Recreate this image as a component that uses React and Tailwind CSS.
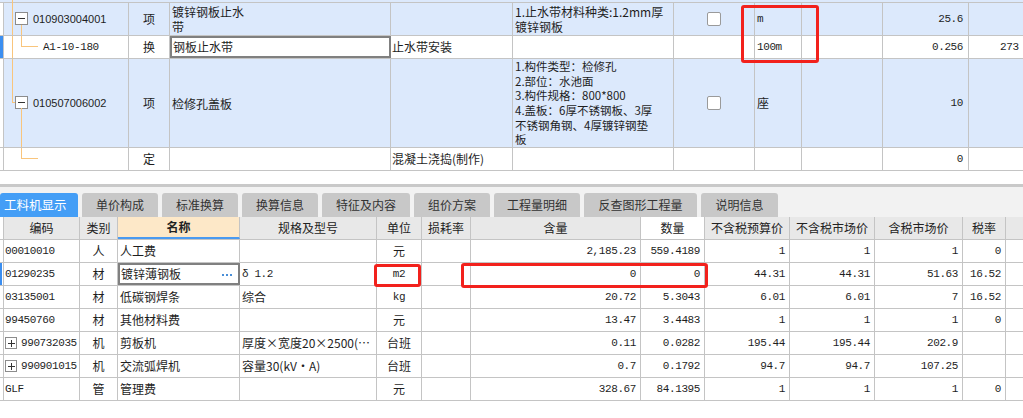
import React from "react";

const CJK = "font-['Noto_Sans_CJK_SC',sans-serif]";
const MONO = "font-['Liberation_Mono','Noto_Sans_CJK_SC',monospace] text-[11px] tracking-[-0.4px]";
const SANS = "font-['Liberation_Sans','Noto_Sans_CJK_SC',sans-serif] text-[11px]";

function Orange({ className }) {
  return <span className={"absolute bg-[#f9c57c] " + className} />;
}

function MinusBox({ className }) {
  return (
    <span className={"absolute w-[13px] h-[13px] border border-[#8c8c8c] bg-white flex items-center justify-center " + className}>
      <span className="block w-[7px] h-[1px] bg-[#333]" />
    </span>
  );
}

function PlusBox() {
  return (
    <span className="relative w-[12px] h-[12px] shrink-0 border border-[#8c8c8c] bg-white flex items-center justify-center">
      <span className="absolute w-[7px] h-[1px] bg-[#333]" />
      <span className="absolute w-[1px] h-[7px] bg-[#333]" />
    </span>
  );
}

function CheckBox() {
  return <span className="block w-[14px] h-[14px] bg-white border border-[#9a9a9a] rounded-[2px]" />;
}

function TopRow({ h, blue, active, tree, code, kind, name, editName, item, desc, check, unit, qty, extra }) {
  return (
    <div className={`flex shrink-0 border-b border-[#c4c4c4] ${h} ${blue ? "bg-[#dce9fc]" : "bg-white"}`}>
      <div className={`w-[3px] shrink-0 ${active ? "bg-[#3b8ef0]" : "bg-white"}`} />
      <div className="relative w-[126px] shrink-0 border-x border-[#c4c4c4] flex items-center">
        {tree}
        {code}
      </div>
      <div className="w-[41px] shrink-0 border-r border-[#c4c4c4] flex items-center justify-center">{kind}</div>
      {editName ? (
        <div className="w-[221px] shrink-0 border-2 border-[#808080] bg-white flex items-center pl-[1px]">{name}</div>
      ) : (
        <div className="w-[221px] shrink-0 border-r border-[#c4c4c4] flex items-center pl-[2px] leading-[15px]">{name}</div>
      )}
      <div className="w-[122px] shrink-0 border-r border-[#c4c4c4] flex items-center pl-[1px]">{item}</div>
      <div className="w-[161px] shrink-0 border-r border-[#c4c4c4] flex items-center pl-[2px] whitespace-nowrap">{desc}</div>
      <div className="w-[81px] shrink-0 border-r border-[#c4c4c4] flex items-center justify-center">{check ? <CheckBox /> : null}</div>
      <div className="w-[47px] shrink-0 border-r border-[#c4c4c4] flex items-center pl-[2px]">{unit}</div>
      <div className="w-[81px] shrink-0 border-r border-[#c4c4c4]" />
      <div className={`w-[86px] shrink-0 border-r border-[#c4c4c4] flex items-center justify-end pr-[5px] ${MONO}`}>{qty}</div>
      <div className={`w-[100px] shrink-0 flex items-center pl-[31px] ${MONO}`}>{extra}</div>
    </div>
  );
}

const bottomRows = [
  { code: "00010010", type: "人", name: "人工费", spec: "", unit: "元", hl: "2,185.23", sl: "559.4189", p1: "1", p2: "1", p3: "1", tax: "0" },
  { code: "01290235", type: "材", name: "镀锌薄钢板", spec: "δ1.2", unit: "m2", hl: "0", sl: "0", p1: "44.31", p2: "44.31", p3: "51.63", tax: "16.52", edit: true },
  { code: "03135001", type: "材", name: "低碳钢焊条", spec: "综合", unit: "kg", hl: "20.72", sl: "5.3043", p1: "6.01", p2: "6.01", p3: "7", tax: "16.52" },
  { code: "99450760", type: "材", name: "其他材料费", spec: "", unit: "元", hl: "13.47", sl: "3.4483", p1: "1", p2: "1", p3: "1", tax: "0" },
  { code: "990732035", plus: true, type: "机", name: "剪板机", spec: "厚度×宽度20×2500(…", unit: "台班", hl: "0.11", sl: "0.0282", p1: "195.44", p2: "195.44", p3: "202.9", tax: "" },
  { code: "990901015", plus: true, type: "机", name: "交流弧焊机", spec: "容量30(kV·A)", unit: "台班", hl: "0.7", sl: "0.1792", p1: "94.7", p2: "94.7", p3: "107.25", tax: "" },
  { code: "GLF", type: "管", name: "管理费", spec: "", unit: "元", hl: "328.67", sl: "84.1395", p1: "1", p2: "1", p3: "1", tax: "0" },
];

const tabs = [
  { t: "工料机显示", w: "w-[78px]", active: true },
  { t: "单价构成", w: "w-[76px]" },
  { t: "标准换算", w: "w-[76px]" },
  { t: "换算信息", w: "w-[76px]" },
  { t: "特征及内容", w: "w-[88px]" },
  { t: "组价方案", w: "w-[76px]" },
  { t: "工程量明细", w: "w-[86px]" },
  { t: "反查图形工程量", w: "w-[113px]" },
  { t: "说明信息", w: "w-[77px]" },
];

function isAsciiUnit(u) {
  return /^[a-z0-9]+$/i.test(u);
}

function BottomRow({ r }) {
  const num = `flex items-center justify-end pr-[4px] border-r border-[#c4c4c4] ${MONO}`;
  return (
    <div className="flex shrink-0 h-[23px] border-b border-[#c4c4c4] bg-white">
      <div className="w-[3px] shrink-0 flex">
        {r.edit ? <div className="w-[2px] bg-[#3b8ef0]" /> : null}
      </div>
      <div className={`w-[77px] shrink-0 border-x border-[#c4c4c4] flex items-center pl-[1px] gap-[4px] ${MONO}`}>
        {r.plus ? <PlusBox /> : null}
        <span>{r.code}</span>
      </div>
      <div className="w-[38px] shrink-0 border-r border-[#c4c4c4] flex items-center justify-center">{r.type}</div>
      {r.edit ? (
        <div className="w-[122px] shrink-0 border-2 border-[#808080] flex items-center pl-[1px] justify-between pr-[6px]">
          <span>{r.name}</span>
          <span className="flex items-center gap-[2px] pt-[2px]">
            <span className="block w-[2px] h-[2px] bg-[#4a8fd8]" />
            <span className="block w-[2px] h-[2px] bg-[#4a8fd8]" />
            <span className="block w-[2px] h-[2px] bg-[#4a8fd8]" />
          </span>
        </div>
      ) : (
        <div className="w-[122px] shrink-0 border-r border-[#c4c4c4] flex items-center pl-[2px]">{r.name}</div>
      )}
      <div className="w-[137px] shrink-0 border-r border-[#c4c4c4] flex items-center pl-[2px] whitespace-nowrap overflow-hidden">
        {r.spec === "δ1.2" ? <span className={MONO}>δ 1.2</span> : r.spec}
      </div>
      <div className={`w-[45px] shrink-0 border-r border-[#c4c4c4] flex items-center justify-center ${isAsciiUnit(r.unit) ? MONO : ""}`}>{r.unit}</div>
      <div className="w-[49px] shrink-0 border-r border-[#c4c4c4]" />
      <div className={`w-[170px] shrink-0 ${num}`}>{r.hl}</div>
      <div className={`w-[64px] shrink-0 ${num}`}>{r.sl}</div>
      <div className={`w-[85px] shrink-0 ${num}`}>{r.p1}</div>
      <div className={`w-[85px] shrink-0 ${num}`}>{r.p2}</div>
      <div className={`w-[88px] shrink-0 ${num}`}>{r.p3}</div>
      <div className={`w-[43px] shrink-0 ${num}`}>{r.tax}</div>
      <div className="w-[60px] shrink-0" />
    </div>
  );
}

export default function App() {
  return (
    <div className={`relative w-[1023px] h-[418px] overflow-hidden bg-white text-[12px] text-[#1e1e1e] flex flex-col ${CJK}`}>
      {/* top table */}
      <div className="flex flex-col shrink-0 w-[1100px]">
        <div className="h-[3px] shrink-0 border-b border-[#c4c4c4] bg-[#dce9fc] relative">
          <span className="absolute left-[12px] top-0 w-[1px] h-[3px] bg-[#f9c57c]" />
        </div>
        <TopRow
          h="h-[33px]"
          blue
          tree={
            <>
              <Orange className="left-[8px] top-0 bottom-0 w-[1px]" />
              <MinusBox className="left-[11px] top-[9px]" />
              <Orange className="left-[17px] top-[22px] bottom-0 w-[1px]" />
            </>
          }
          code={<span className={`pl-[29px] ${SANS}`}>010903004001</span>}
          kind="项"
          name={
            <span>
              镀锌钢板止水
              <br />
              带
            </span>
          }
          desc={
            <span className="leading-[15px]">
              1.止水带材料种类:1.2mm厚
              <br />
              镀锌钢板
            </span>
          }
          check
          unit={<span className={MONO}>m</span>}
          qty="25.6"
        />
        <TopRow
          h="h-[23px]"
          active
          tree={
            <>
              <Orange className="left-[8px] top-0 bottom-0 w-[1px]" />
              <Orange className="left-[17px] top-0 h-[10px] w-[1px]" />
              <Orange className="left-[17px] top-[10px] w-[17px] h-[1px]" />
            </>
          }
          code={<span className={`pl-[39px] ${MONO}`}>A1-10-180</span>}
          kind="换"
          name="钢板止水带"
          editName
          item="止水带安装"
          unit={<span className={MONO}>100m</span>}
          qty="0.256"
          extra="273"
        />
        <TopRow
          h="h-[89px]"
          blue
          tree={
            <>
              <Orange className="left-[8px] top-0 h-[43px] w-[1px]" />
              <Orange className="left-[8px] top-[43px] w-[4px] h-[1px]" />
              <MinusBox className="left-[11px] top-[37px]" />
              <Orange className="left-[17px] top-[49px] bottom-0 w-[1px]" />
            </>
          }
          code={<span className={`pl-[29px] ${SANS}`}>010507006002</span>}
          kind="项"
          name="检修孔盖板"
          desc={
            <span className="leading-[14.6px] text-[11.5px]">
              1.构件类型：检修孔
              <br />
              2.部位：水池面
              <br />
              3.构件规格：800*800
              <br />
              4.盖板：6厚不锈钢板、3厚
              <br />
              不锈钢角钢、4厚镀锌钢垫
              <br />板
            </span>
          }
          check
          unit="座"
          qty="10"
        />
        <TopRow
          h="h-[23px]"
          tree={
            <>
              <Orange className="left-[17px] top-0 h-[10px] w-[1px]" />
              <Orange className="left-[17px] top-[10px] w-[17px] h-[1px]" />
            </>
          }
          code={null}
          kind="定"
          name=""
          item="混凝土浇捣(制作)"
          qty="0"
        />
      </div>

      <div className="h-[13px] shrink-0" />
      <div className="h-[3px] shrink-0 bg-[#c9c9c9]" />

      {/* tabs */}
      <div className="h-[30px] shrink-0 bg-[#f2f2f2] flex items-end gap-[4px]">
        {tabs.map((t) => (
          <div
            key={t.t}
            className={`${t.w} h-[24px] shrink-0 rounded-t-[3px] flex items-center ${
              t.active ? "bg-[#449ef6] text-white justify-start pl-[4px] text-[12.5px]" : "bg-[#c8c8c8] text-[#333] justify-center"
            }`}
          >
            {t.t}
          </div>
        ))}
      </div>

      {/* header */}
      <div className="flex shrink-0 h-[23px] border-b border-[#c4c4c4] bg-white text-[#222]">
        <div className="w-[3px] shrink-0" />
        <div className="w-[77px] shrink-0 border-x border-[#c4c4c4] bg-[#e8e8e8] flex items-center justify-center">编码</div>
        <div className="w-[38px] shrink-0 border-r border-[#c4c4c4] bg-[#e8e8e8] flex items-center justify-center">类别</div>
        <div className="w-[122px] shrink-0 border-r border-[#c4c4c4] bg-[#fde8c8] border-b-2 border-b-[#4a9af0] flex items-center justify-center font-bold">名称</div>
        <div className="w-[137px] shrink-0 border-r border-[#c4c4c4] bg-[#e8e8e8] flex items-center justify-center">规格及型号</div>
        <div className="w-[45px] shrink-0 border-r border-[#c4c4c4] bg-[#e8e8e8] flex items-center justify-center">单位</div>
        <div className="w-[49px] shrink-0 border-r border-[#c4c4c4] bg-[#e8e8e8] flex items-center justify-center">损耗率</div>
        <div className="w-[170px] shrink-0 border-r border-[#c4c4c4] bg-[#e8e8e8] flex items-center justify-center">含量</div>
        <div className="w-[64px] shrink-0 border-r border-[#c4c4c4] bg-white flex items-center justify-center">数量</div>
        <div className="w-[85px] shrink-0 border-r border-[#c4c4c4] bg-[#e8e8e8] flex items-center justify-center">不含税预算价</div>
        <div className="w-[85px] shrink-0 border-r border-[#c4c4c4] bg-[#e8e8e8] flex items-center justify-center">不含税市场价</div>
        <div className="w-[88px] shrink-0 border-r border-[#c4c4c4] bg-[#e8e8e8] flex items-center justify-center">含税市场价</div>
        <div className="w-[43px] shrink-0 border-r border-[#c4c4c4] bg-[#e8e8e8] flex items-center justify-center">税率</div>
        <div className="w-[60px] shrink-0 bg-[#e8e8e8]" />
      </div>

      {bottomRows.map((r) => (
        <BottomRow key={r.code} r={r} />
      ))}

      {/* red highlight boxes */}
      <div className="absolute left-[741px] top-[5px] w-[78px] h-[58px] border-[3px] border-[#f2211c] rounded-[3px]" />
      <div className="absolute left-[374px] top-[264px] w-[47px] h-[23px] border-[3px] border-[#f2211c] rounded-[3px]" />
      <div className="absolute left-[461px] top-[263px] w-[247px] h-[25px] border-[3px] border-[#f2211c] rounded-[3px]" />
    </div>
  );
}
